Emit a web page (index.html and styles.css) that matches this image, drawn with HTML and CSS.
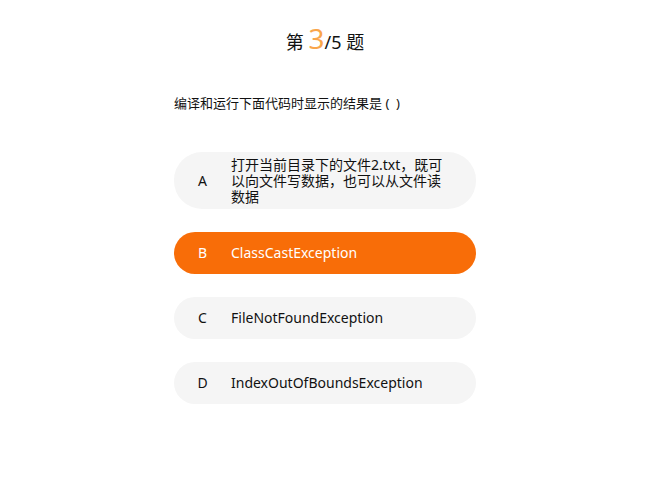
FILE: index.html
```html
<!DOCTYPE html>
<html lang="zh-CN">
<head>
<meta charset="utf-8">
<title>第 3/5 题</title>
<link rel="stylesheet" href="styles.css">
</head>
<body>
<main class="quiz">
  <h1 class="title">第 <span class="current">3</span>/5 题</h1>
  <p class="question">编译和运行下面代码时显示的结果是 ( &nbsp;)</p>
  <ul class="options">
    <li class="option tall"><span class="letter">A</span><span class="text">打开当前目录下的文件2.txt，既可以向文件写数据，也可以从文件读数据</span></li>
    <li class="option selected"><span class="letter">B</span><span class="text">ClassCastException</span></li>
    <li class="option"><span class="letter">C</span><span class="text">FileNotFoundException</span></li>
    <li class="option"><span class="letter">D</span><span class="text">IndexOutOfBoundsException</span></li>
  </ul>
</main>
</body>
</html>
```

FILE: styles.css
```css
html, body {
  margin: 0;
  padding: 0;
  background: #ffffff;
}

body {
  font-family: "Noto Sans", "Noto Sans CJK SC", sans-serif;
  color: #111111;
}

.quiz {
  width: 302px;
  margin: 0 auto;
}

.title {
  margin: 0;
  padding-top: 22px;
  font-size: 18px;
  font-weight: normal;
  line-height: 32px;
  text-align: center;
  color: #111111;
}

.current {
  font-size: 28px;
  color: #f9a64b;
}

.question {
  margin: 36px 0 0;
  font-size: 13px;
  line-height: 18px;
}

.options {
  list-style: none;
  margin: 40px 0 0;
  padding: 0;
  display: flex;
  flex-direction: column;
  gap: 23px;
}

.option {
  display: flex;
  align-items: center;
  min-height: 42px;
  box-sizing: border-box;
  padding: 4px 30px 4px 0;
  border-radius: 28px;
  background: #f5f5f5;
  font-size: 14px;
  line-height: 16px;
}

.option.tall {
  padding-top: 4.5px;
  padding-bottom: 4.5px;
}

.option.selected {
  background: #f86d08;
  color: #ffffff;
}

.letter {
  flex: 0 0 57px;
  text-align: center;
}

.text {
  flex: 1;
}
```
